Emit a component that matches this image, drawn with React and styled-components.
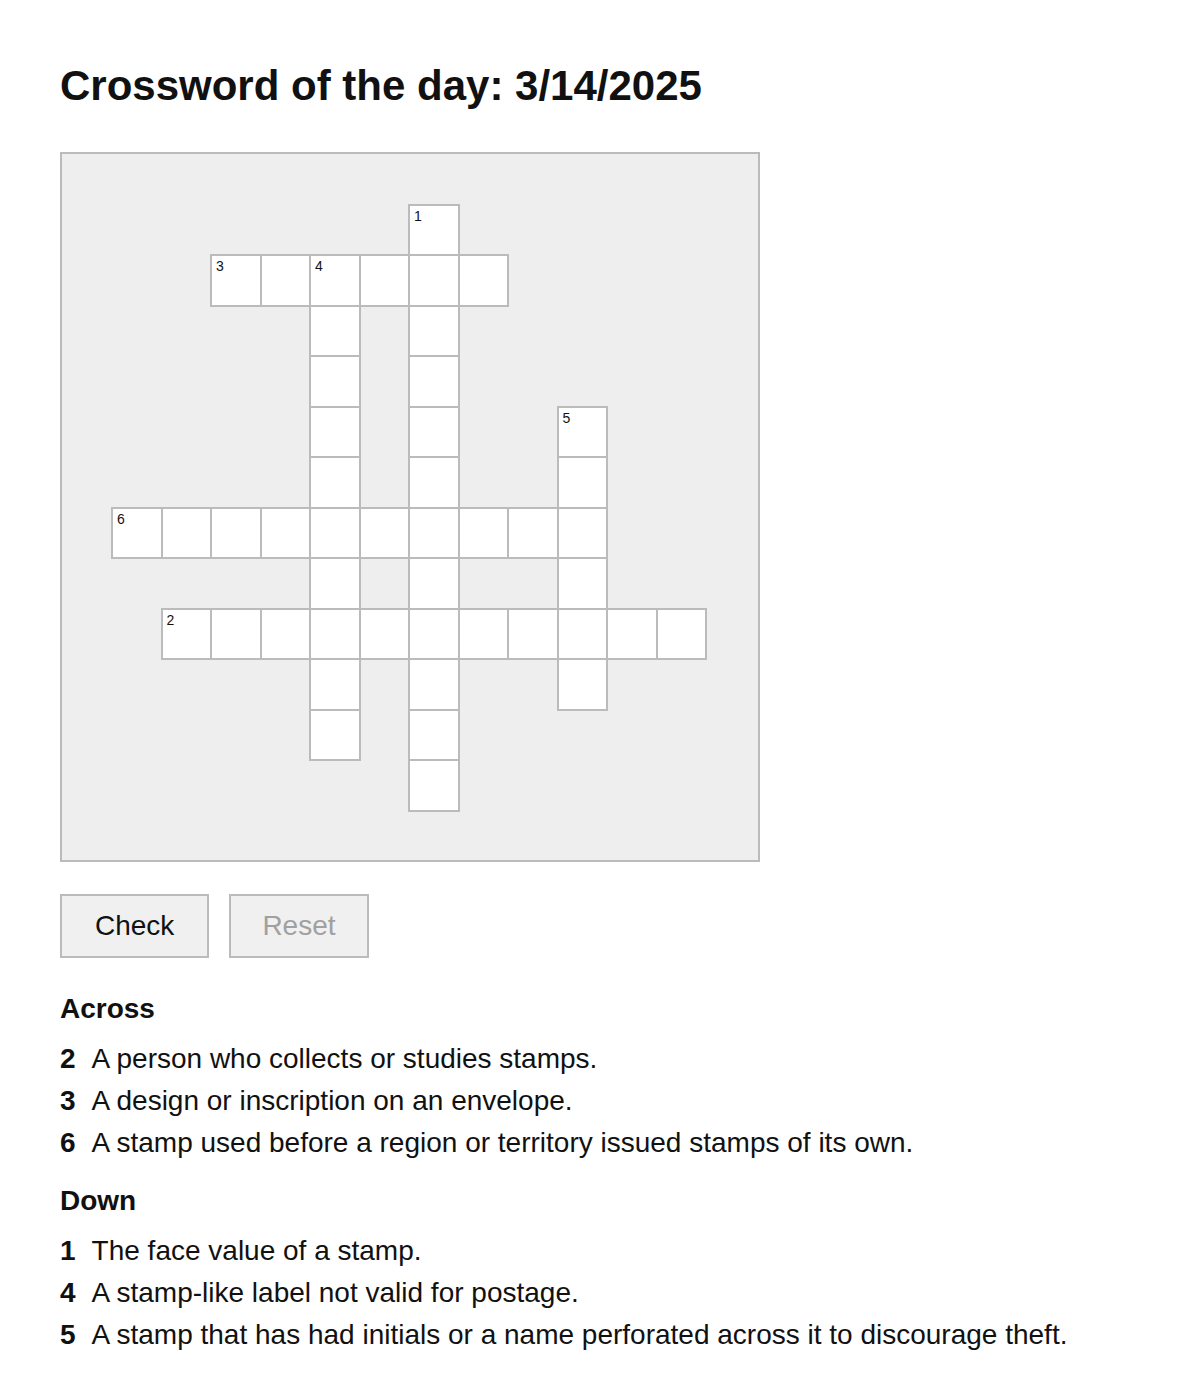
import React from "react";
import styled, { createGlobalStyle } from "styled-components";

const Global = createGlobalStyle`
  html, body { margin: 0; padding: 0; background: #fff; }
  body { font-family: "Liberation Sans", Arial, sans-serif; color: #111; }
  * { box-sizing: border-box; }
`;

const Page = styled.main`
  padding: 62px 60px 40px;
`;

const Title = styled.h1`
  margin: 0 0 42px;
  font-size: 42px;
  line-height: 48px;
  font-weight: 700;
  color: #111;
`;

const Board = styled.div`
  width: 700px;
  height: 710px;
  border: 2px solid #bbb;
  background: #eee;
  display: grid;
  grid-template-columns: repeat(14, 49.5px);
  grid-template-rows: repeat(14, 50.5px);
  overflow: hidden;
`;

const Cell = styled.div`
  position: relative;
  grid-column: ${(p) => p.$col + 1};
  grid-row: ${(p) => p.$row + 1};
  width: calc(100% + 2px);
  height: calc(100% + 2px);
  margin: -1px 0 0 -0.5px;
  background: #fff;
  border: 2px solid #bbb;
  z-index: 1;
`;

const Num = styled.span`
  position: absolute;
  top: 2px;
  left: 4px;
  font-size: 14px;
  line-height: 16px;
  color: #111;
`;

const Actions = styled.div`
  display: flex;
  gap: 20px;
  margin-top: 32px;
`;

const Button = styled.button`
  font-family: "Liberation Sans", Arial, sans-serif;
  font-size: 28px;
  line-height: 32px;
  padding: 14px ${(p) => (p.$wide ? 33 : 31)}px;
  background: #f0f0f0;
  border: 2px solid #bbb;
  border-radius: 0;
  color: ${(p) => (p.disabled ? "#a0a0a0" : "#111")};
  cursor: ${(p) => (p.disabled ? "default" : "pointer")};
`;

const Section = styled.section`
  margin-top: ${(p) => p.$top}px;
`;

const Heading = styled.h2`
  margin: 0 0 13px;
  font-size: 28px;
  line-height: 32px;
  font-weight: 700;
`;

const List = styled.ol`
  list-style: none;
  margin: 0;
  padding: 0;
`;

const Clue = styled.li`
  display: flex;
  gap: 16px;
  font-size: 28px;
  line-height: 42px;
  color: #111;
`;

const ClueNum = styled.b`
  font-weight: 700;
`;

const words = [
  { n: 1, dir: "down", col: 7, row: 1, len: 12 },
  { n: 3, dir: "across", col: 3, row: 2, len: 6 },
  { n: 4, dir: "down", col: 5, row: 2, len: 10 },
  { n: 5, dir: "down", col: 10, row: 5, len: 6 },
  { n: 6, dir: "across", col: 1, row: 7, len: 10 },
  { n: 2, dir: "across", col: 2, row: 9, len: 11 },
];

function buildCells() {
  const map = new Map();
  words.forEach((w) => {
    for (let i = 0; i < w.len; i++) {
      const col = w.dir === "across" ? w.col + i : w.col;
      const row = w.dir === "down" ? w.row + i : w.row;
      const key = `${col}-${row}`;
      const existing = map.get(key) || { col, row, num: null };
      if (i === 0) existing.num = w.n;
      map.set(key, existing);
    }
  });
  return Array.from(map.values()).sort((a, b) => a.row - b.row || a.col - b.col);
}

const across = [
  [2, "A person who collects or studies stamps."],
  [3, "A design or inscription on an envelope."],
  [6, "A stamp used before a region or territory issued stamps of its own."],
];
const down = [
  [1, "The face value of a stamp."],
  [4, "A stamp-like label not valid for postage."],
  [5, "A stamp that has had initials or a name perforated across it to discourage theft."],
];

export default function App() {
  const cells = buildCells();
  return (
    <>
      <Global />
      <Page>
        <Title>Crossword of the day: 3/14/2025</Title>
        <Board>
          {cells.map((c) => (
            <Cell key={`${c.col}-${c.row}`} $col={c.col} $row={c.row}>
              {c.num && <Num>{c.num}</Num>}
            </Cell>
          ))}
        </Board>
        <Actions>
          <Button $wide>Check</Button>
          <Button disabled>Reset</Button>
        </Actions>
        <Section $top={35}>
          <Heading>Across</Heading>
          <List>
            {across.map(([n, t]) => (
              <Clue key={n}>
                <ClueNum>{n}</ClueNum>
                <span>{t}</span>
              </Clue>
            ))}
          </List>
        </Section>
        <Section $top={21}>
          <Heading>Down</Heading>
          <List>
            {down.map(([n, t]) => (
              <Clue key={n}>
                <ClueNum>{n}</ClueNum>
                <span>{t}</span>
              </Clue>
            ))}
          </List>
        </Section>
      </Page>
    </>
  );
}
